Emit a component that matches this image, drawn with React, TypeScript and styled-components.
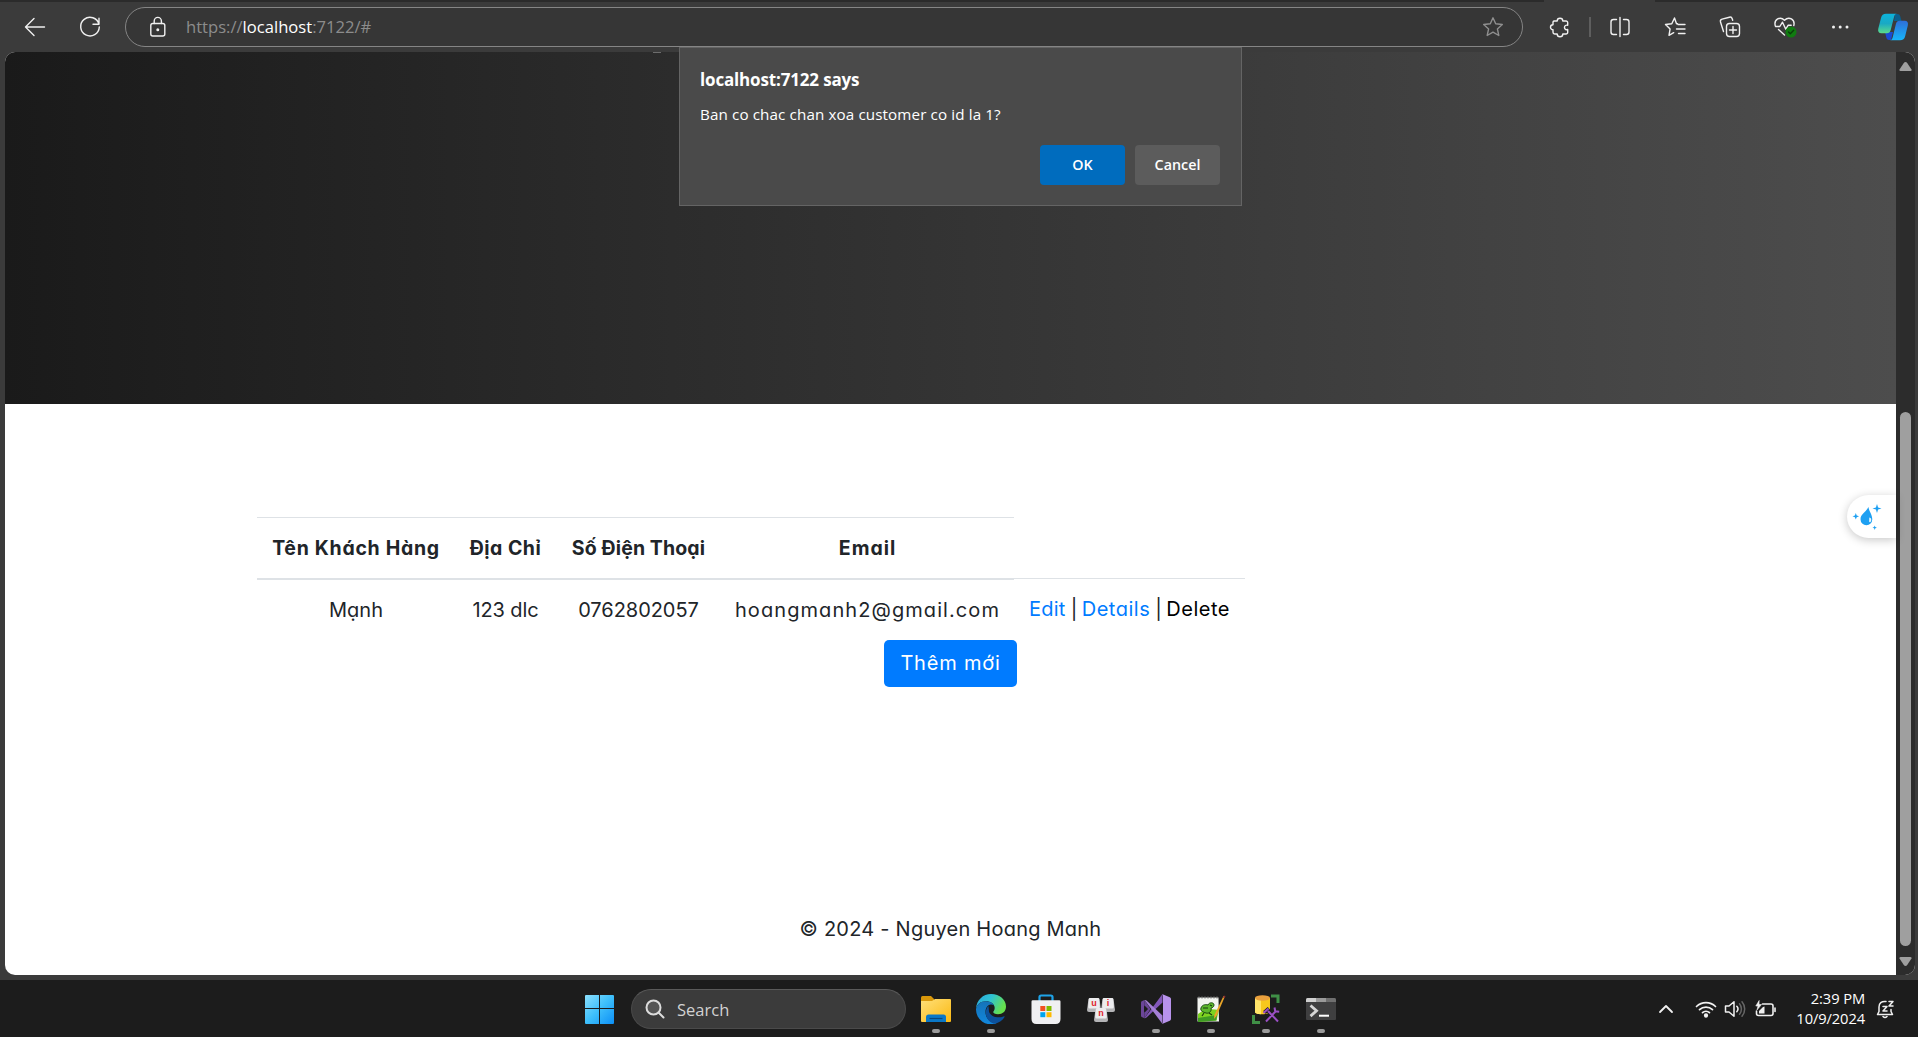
import React from 'react';
import styled, { createGlobalStyle } from 'styled-components';

const GlobalStyle = createGlobalStyle`
  * { box-sizing: border-box; }
  body { margin: 0; overflow: hidden; background: #3b3b3b; }
`;

const ui = `'Open Sans', 'Noto Sans', sans-serif`;
const pageFont = `Inter, 'Noto Sans', sans-serif`;

const Screen = styled.div`
  width: 1918px;
  height: 1037px;
  display: flex;
  flex-direction: column;
  background: #3b3b3b;
  font-family: ${ui};
`;

const TabStrip = styled.div`
  height: 2px;
  flex: none;
  display: flex;
  justify-content: space-between;
`;
const StripPart = styled.div<{ $w: number }>`
  width: ${p => p.$w}px;
  background: #2b2b2b;
`;

const Toolbar = styled.div`
  height: 50px;
  flex: none;
  display: flex;
  align-items: center;
  padding: 0 0 1px 7px;
`;
const Slot = styled.div<{ $w?: number }>`
  width: ${p => p.$w ?? 55}px;
  height: 40px;
  flex: none;
  display: flex;
  align-items: center;
  justify-content: center;
  svg { display: block; overflow: visible; }
`;
const AddressBar = styled.div`
  width: 1398px;
  height: 40px;
  margin: 0 9px 0 8px;
  padding: 0 18px 0 23px;
  flex: none;
  display: flex;
  align-items: center;
  border: 1px solid #858585;
  border-radius: 20px;
  background: #363636;
`;
const Url = styled.div`
  flex: 1;
  margin-left: 19px;
  font-size: 16.6px;
  line-height: 24px;
  color: #8c8c8c;
  b { font-weight: 400; color: #fff; }
`;
const Divider = styled.div`
  width: 2px;
  height: 20px;
  background: #5e5e5e;
`;

const Viewport = styled.div`
  position: relative;
  margin: 0 3px 0 5px;
  height: 923px;
  flex: none;
  display: flex;
  border-radius: 10px;
  overflow: hidden;
  background: #fff;
`;
const Page = styled.main`
  position: relative;
  width: 1891px;
  display: flex;
  flex-direction: column;
  font-family: ${pageFont};
  font-feature-settings: 'cv11';
  font-size: 20px;
  font-weight: 370;
  color: #212529;
`;
const Hero = styled.div`
  height: 352px;
  flex: none;
  background: linear-gradient(to right, #1a1a1a, #4d4d4d);
`;
const HeroMark = styled.div`
  width: 8px;
  height: 1px;
  margin-left: 648px;
  background: #6d6d6d;
`;
const Table = styled.div`
  width: 988px;
  margin: 113px 0 0 252px;
  display: grid;
  grid-template-columns: 196px 103px 163px 295px 231px;
  flex: none;
`;
const HeadCell = styled.div<{ $ls?: number }>`
  height: 63px;
  padding-left: 2px;
  display: flex;
  align-items: center;
  justify-content: center;
  border-top: 1px solid #dee2e6;
  border-bottom: 2px solid #dee2e6;
  font-size: 19.5px;
  font-weight: 700;
  letter-spacing: ${p => p.$ls ?? 0}px;
  white-space: nowrap;
`;
const HeadGap = styled.div`
  height: 62px;
  border-bottom: 1px solid #dee2e6;
`;
const Cell = styled.div<{ $ls?: number; $left?: boolean }>`
  height: 60px;
  padding: ${p => (p.$left ? '0 0 2px 15px' : '0 0 0 2px')};
  display: flex;
  align-items: center;
  justify-content: ${p => (p.$left ? 'flex-start' : 'center')};
  letter-spacing: ${p => p.$ls ?? 0}px;
  white-space: pre;
`;
const Link = styled.a<{ $dark?: boolean; $ls?: number }>`
  color: ${p => (p.$dark ? '#000' : '#007bff')};
  letter-spacing: ${p => p.$ls ?? 0.5}px;
`;
const AddButton = styled.button`
  align-self: center;
  width: 133px;
  height: 47px;
  padding: 0 0 2px;
  flex: none;
  border: 0;
  border-radius: 5px;
  background: #007bff;
  color: #fff;
  font: inherit;
  font-feature-settings: 'cv11';
  letter-spacing: 0.8px;
`;
const Footer = styled.footer`
  margin-top: 230px;
  height: 24px;
  line-height: 24px;
  text-align: center;
  letter-spacing: 0.23px;
`;

const Helper = styled.div`
  position: absolute;
  right: 0;
  top: 443px;
  width: 49px;
  height: 43px;
  padding: 8px 0 0 5px;
  border-radius: 22px 0 0 22px;
  background: #fff;
  box-shadow: 0 2px 10px rgba(0, 0, 0, 0.22);
`;

const Scrollbar = styled.div`
  flex: 1;
  display: flex;
  flex-direction: column;
  align-items: center;
  padding: 10px 0 9px;
  background: #2c2c2c;
  svg { display: block; }
`;
const Thumb = styled.div`
  width: 11px;
  height: 534px;
  margin: 341px 0 auto;
  border-radius: 6px;
  background: #9f9f9f;
`;

const Dialog = styled.div`
  position: absolute;
  left: 679px;
  top: 47px;
  width: 563px;
  height: 159px;
  padding: 20px 21px 20px 20px;
  display: flex;
  flex-direction: column;
  border: 1px solid #646464;
  background: #4a4a4a;
  color: #fff;
  font-family: ${ui};
`;
const DialogTitle = styled.div`
  font-size: 17px;
  line-height: 24px;
  font-weight: 700;
  letter-spacing: -0.16px;
`;
const DialogText = styled.div`
  margin-top: 11px;
  font-size: 15.2px;
  line-height: 22px;
  letter-spacing: 0.12px;
`;
const DialogActions = styled.div`
  margin-top: 20px;
  display: flex;
  justify-content: flex-end;
  gap: 10px;
`;
const DialogButton = styled.button<{ $primary?: boolean }>`
  width: 85px;
  height: 40px;
  padding: 0 0 1px;
  border: 0;
  border-radius: 4px;
  background: ${p => (p.$primary ? '#006cbe' : '#5c5c5c')};
  color: #fff;
  font: 600 14.3px ${ui};
`;

const Taskbar = styled.div`
  height: 57px;
  margin-top: 5px;
  flex: none;
  display: flex;
  align-items: flex-start;
  padding: 9px 0 0 572px;
  background: #1c1c1c;
`;
const SearchBox = styled.div`
  width: 275px;
  height: 40px;
  margin: 0 2px 0 4px;
  padding-left: 13px;
  flex: none;
  display: flex;
  align-items: center;
  gap: 12px;
  border: 1px solid #4a4a4a;
  border-top-color: #5a5a5a;
  border-radius: 20px;
  background: #3b3b3b;
  color: #d2d2d2;
  font-size: 16.5px;
`;
const TaskSlot = styled.div`
  width: 55px;
  height: 44px;
  flex: none;
  display: flex;
  flex-direction: column;
  align-items: center;
  svg { display: block; margin-top: 5px; flex: none; }
`;
const Running = styled.div`
  width: 8px;
  height: 4px;
  margin-top: 5px;
  border-radius: 2px;
  background: #9a9a9a;
`;
const Tray = styled.div`
  margin-left: auto;
  padding-right: 23px;
  height: 40px;
  display: flex;
  align-items: center;
  svg { display: block; flex: none; }
`;
const TrayIcon = styled.div<{ $gap: number }>`
  margin-right: ${p => p.$gap}px;
`;
const Clock = styled.div`
  width: 88px;
  margin: -2px 10px 0 0;
  text-align: right;
  color: #fff;
  font-size: 14.7px;
  line-height: 20px;
  letter-spacing: -0.1px;
`;

const Line = ({ w = 22, h = 22, color = '#f0f0f0', sw = 1.4, children }: any) => (
  <svg width={w} height={h} viewBox={`0 0 ${w} ${h}`} fill="none" stroke={color} strokeWidth={sw} strokeLinecap="round" strokeLinejoin="round">
    {children}
  </svg>
);

const STAR = 'M11 1.8l2.7 6 6.6.7-4.9 4.4 1.4 6.6L11 16.2l-5.8 3.3 1.4-6.6-4.9-4.4 6.6-.7z';

const Back = () => <Line><path d="M20.500 11H1.500M10 2.500L1.500 11l8.500 8.500" /></Line>;
const Refresh = () => <Line><path d="M20 8.200A9.300 9.300 0 1 0 20.300 11M20 2.200v6h-6" /></Line>;
const Lock = () => (
  <Line w={18} h={22}>
    <rect x="1.800" y="7.500" width="14" height="12.500" rx="2" />
    <path d="M5.200 7.500V5a3.600 3.600 0 0 1 7.200 0v2.500" />
    <circle cx="8.800" cy="13.700" r=".8" fill="#f0f0f0" />
  </Line>
);
const Puzzle = () => (
  <Line>
    <path d="M5 5h3.200a2.800 2.800 0 0 1 5.600 0H17a1.700 1.700 0 0 1 1.700 1.700v2.600a2.300 2.300 0 1 0 0 4.200v2.800A1.700 1.700 0 0 1 17 18h-3.200a2.800 2.800 0 0 1-5.600 0H5.700A1.700 1.700 0 0 1 4 16.300v-2.600a2.500 2.500 0 0 1 0-5V6.500A1.500 1.500 0 0 1 5 5z" />
  </Line>
);
const Split = () => (
  <Line>
    <path d="M7.500 3.500h-3a2.500 2.500 0 0 0-2.500 2.500v10a2.500 2.500 0 0 0 2.500 2.500h3M14.500 3.500h3A2.500 2.500 0 0 1 20 6v10a2.500 2.500 0 0 1-2.500 2.500h-3M11 1.500v19" />
  </Line>
);
const Favorites = () => (
  <Line>
    <path d="M13.500 7.800h-1L10.500 2 7.800 7.700l-6.300.8 4.600 4.400L5 19.400l4.700-2.700M14 8.500h7M12.500 13h8.500M14.500 17.500h6.500" />
  </Line>
);
const Collections = () => (
  <Line>
    <rect x="7.500" y="7.500" width="13" height="13" rx="3" />
    <path d="M14 10.500v7M10.500 14h7M4.500 15.500l-3-9.500a2.300 2.300 0 0 1 1.600-2.800l7.300-2a2.300 2.300 0 0 1 2.800 1.500l.5 1.600" />
  </Line>
);
const Health = () => (
  <Line>
    <path d="M1.200 9.500C-.2 3.500 6-.2 10.500 4.300 15 -.2 21.300 3.500 19.800 9.500M1.500 10.500h4.300l2.700-4.300 3.300 7 2.400-4h3M4.500 13.500l6 5.500" />
    <circle cx="17" cy="16" r="5.500" fill="#107c10" stroke="none" />
    <path d="M14.500 16l1.800 1.800 3.400-3.500" stroke="#0a3d0a" />
  </Line>
);
const Dots = () => (
  <svg width="20" height="6" fill="#f0f0f0"><circle cx="3.500" cy="3" r="1.500" /><circle cx="10.200" cy="3" r="1.500" /><circle cx="17" cy="3" r="1.500" /></svg>
);
const Copilot = () => (
  <svg width="30" height="28" viewBox="0 0 30 28">
    <defs>
      <linearGradient id="cpa" x1="0" y1="0" x2="0" y2="1"><stop stopColor="#0cb4dd" /><stop offset=".5" stopColor="#1aa9c4" /><stop offset="1" stopColor="#5bdc8a" /></linearGradient>
      <linearGradient id="cpb" x1="0" y1="0" x2="0" y2="1"><stop stopColor="#2e6fd8" /><stop offset="1" stopColor="#17b6fb" /></linearGradient>
    </defs>
    <path d="M17 1h2.500c1.500 0 2.300.8 2.800 2.500L23.500 8H16z" fill="#0b5f8e" />
    <path d="M13 27h-2c-1.500 0-2.300-1-2.700-2.500L7 19h8z" fill="#1a4bd2" />
    <path d="M8 .8h11c-1.700 0-2.400 1.200-2.900 3L12.700 17c-.7 2.400-1.800 3.300-4 3.300H3.500C.8 20.300-.4 18.500.3 15.500L3 5C3.800 2 5.200.8 8 .8z" fill="url(#cpa)" />
    <path d="M22 27.200H12c1.500 0 2.200-1 2.700-3L17.900 11c.6-2.300 1.700-3.200 4-3.200h4.700c2.800 0 3.900 1.700 3.200 4.700l-2.600 10.500c-.7 3-2.300 4.200-5.200 4.200z" fill="url(#cpb)" />
  </svg>
);

const Drop = () => (
  <svg width="32" height="28" viewBox="0 0 32 28" fill="#1ea0f2">
    <path d="M16.500 4c.3 4 3.800 7.500 3.800 12.300a5.900 5.900 0 0 1-11.800 0C8.500 11 14 9 16.500 4z" />
    <path d="M17.300 14.500c2 .3 2.300 2 1.600 4-.5 1-1.600 1-1.800 0z" fill="#e8f6ff" />
    <path d="M25 1l1.100 3.400L29.500 5.500l-3.400 1.100L25 10l-1.100-3.400-3.400-1.100 3.400-1.100zM3.800 10l.9 2.400 2.400.9-2.400.9-.9 2.400-.9-2.400-2.400-.9 2.400-.9zM22.700 22.500l.6 1.600 1.600.6-1.600.6-.6 1.600-.6-1.600-1.600-.6 1.600-.6z" />
  </svg>
);

const Windows = () => (
  <svg width="29" height="30" viewBox="0 0 29 30">
    <defs><linearGradient id="win" gradientUnits="userSpaceOnUse" x1="0" y1="0" x2="29" y2="29"><stop stopColor="#8fe1fd" /><stop offset=".5" stopColor="#3fc0fb" /><stop offset="1" stopColor="#0e91f6" /></linearGradient></defs>
    <path d="M1 1h13v13H0V2q0-1 1-1zM15 1h13q1 0 1 1v12H15zM0 15h14v15H1q-1 0-1-1zM15 15h14v14q0 1-1 1H15z" fill="url(#win)" />
  </svg>
);
const Folder = () => (
  <svg width="30" height="30" viewBox="0 0 30 30">
    <defs><linearGradient id="fol" x1="0" y1="0" x2="1" y2="1"><stop stopColor="#ffe07a" /><stop offset="1" stopColor="#fbb912" /></linearGradient></defs>
    <path d="M0 3.500Q0 2 1.500 2H10l3 3v5H0z" fill="#d9980b" />
    <path d="M0 7h11l3-2h15q1 0 1 1v21q0 1-1 1H1q-1 0-1-1z" fill="url(#fol)" />
    <path d="M5 28v-5q0-2.500 2.500-2.500h15Q25 20.500 25 23v5z" fill="#0a78c8" />
    <path d="M8.500 24.500h13" stroke="#08477f" strokeWidth="1.200" />
  </svg>
);
const Edge = () => (
  <svg width="30" height="30" viewBox="0 0 30 30">
    <defs>
      <linearGradient id="eda" x1="0" y1="0" x2="1" y2=".4"><stop stopColor="#2aa6dd" /><stop offset=".5" stopColor="#2fc3d4" /><stop offset="1" stopColor="#66e04e" /></linearGradient>
      <linearGradient id="edb" x1="0" y1="0" x2="0" y2="1"><stop stopColor="#1573b8" /><stop offset="1" stopColor="#1187dd" /></linearGradient>
    </defs>
    <path d="M0 15C.5 6 7 0 15 0c9 0 15 6 15 12.500 0 5-3.500 7.700-8 7.700-3 0-4.800-1-4.800-2.200 0-.8 1.500-1.500 1.500-4C18.700 10 14.500 7.300 10 7.300 5 7.300 1 10 0 15z" fill="url(#eda)" />
    <path d="M0 15c1-5 5-7.700 10-7.700 3.500 0 6.500 1.500 8 4-1-.7-2-.9-3.200-.8-3.500.5-5.300 3.700-5.300 7.500 0 6 4.500 10.500 11 11.300A15 15 0 0 1 0 15z" fill="url(#edb)" />
    <path d="M12.500 12c-5 4.500-3 15.500 5.500 17.700 4.500-.5 8.500-3 10.500-6.700.3-.7-.3-1-1-.6-6.500 2.600-13.500-.6-14.500-5-.3-1.900-.2-3.700-.5-5.400z" fill="#0c519c" />
  </svg>
);
const Store = () => (
  <svg width="30" height="30" viewBox="0 0 30 30">
    <path d="M8.500 8V3.200q0-1.700 1.700-1.700h9.600q1.700 0 1.700 1.700V8" fill="none" stroke="#1ea3e8" strokeWidth="2.200" />
    <path d="M.5 7.500q0-1.300 1.300-1.300h26.400q1.300 0 1.300 1.300V25q0 5-5 5h-19q-5 0-5-5z" fill="#f0f0f2" />
    <path d="M9.300 12h5v5h-5z" fill="#f25022" /><path d="M15.500 12h5v5h-5z" fill="#7fba00" />
    <path d="M9.300 18.200h5v5h-5z" fill="#00a4ef" /><path d="M15.500 18.200h5v5h-5z" fill="#ffb900" />
  </svg>
);
const KeyText = styled.text`
  font: 700 9px 'Liberation Sans', sans-serif;
  fill: #e0252c;
  text-anchor: middle;
`;
const Key = ({ x, y, t }: { x: number; y: number; t: string }) => (
  <g transform={`translate(${x} ${y})`}>
    <path d="M1.500 1Q2 0 3 0h8q1 0 1.500 1L14 12q0 2-2 2H2q-2 0-2-2z" fill="#b4b4b6" />
    <path d="M3 0h8q1 0 1.200 1l.6 8q0 1.500-1.500 1.500H2.700q-1.500 0-1.500-1.500L1.800 1Q2 0 3 0z" fill="#ececee" />
    <KeyText x={7} y={7.500}>{t}</KeyText>
  </g>
);
const Unikey = () => (
  <svg width="30" height="30" viewBox="0 0 30 30">
    <Key x={1} y={4} t="u" /><Key x={15} y={4} t="i" /><Key x={8} y={14} t="n" />
  </svg>
);
const VisualStudio = () => (
  <svg width="30" height="30" viewBox="0 0 30 30">
    <path d="M0 8.500q0-.8.700-1.200L3.500 6v18.300L.7 22.900Q0 22.500 0 21.700z" fill="#6b4699" />
    <path d="M3.500 6v5.500L7 15l-3.500 3.500v5.800L9.500 15z" fill="#6b4699" />
    <path d="M3.500 24.300L21.500 0v8.500L5.500 23.500q-1 1-2 .8z" fill="#8257b9" />
    <path d="M3.500 6q1-.3 2 .6L21.500 21.500V30L3.500 6z" fill="#a47fd6" />
    <path d="M21 0l7.800 3.200q1.200.5 1.200 1.800v20q0 1.300-1.200 1.800L21 30q1-.6 1-2V2q0-1.400-1-2z" fill="#b893ec" />
    <path d="M3 11.500v7L6.500 15z" fill="#1c1c1c" />
  </svg>
);
const Notepad = () => (
  <svg width="30" height="30" viewBox="0 0 30 30">
    <path d="M1.500 3.500h21l.5 24H1.500z" fill="#f2f4f0" />
    <path d="M2 20c7-6 14-5 21-4l-2.500 10.500L2 28z" fill="#7ed321" />
    <path d="M2 24l19-3-.7 5.500L2 28z" fill="#3f9b24" />
    <path d="M3 2.500v2M6 2.500v2M9 2.500v2M12 2.500v2M15 2.500v2M18 2.500v2M21 2.500v2" stroke="#777" strokeWidth="1.200" />
    <path d="M5 14c1-3 4-4 7-3 1-3 6-3 6 0 0 2-2 3-3 3 1 3-2 6-5 5s-6-2-5-5z" fill="#5cb82c" stroke="#1d4d12" strokeWidth="1" />
    <path d="M7 14h5M14 11l2 1M8 19l-2 3M13 19l3 2" stroke="#163c0e" strokeWidth="1.200" />
    <path d="M27.500 2l1.300.8L20.500 22 18 25l.3-3.800z" fill="#e9a528" /><path d="M27 3.500l1-2 1.500.8-1 2z" fill="#8b2e34" />
  </svg>
);
const Database = () => (
  <svg width="30" height="30" viewBox="0 0 30 30">
    <path d="M20 2h7v7M2.500 21v7.500H9" fill="none" stroke="#3f8f46" strokeWidth="3" />
    <path d="M4 4v14c0 3 15 3 15 0V4z" fill="#f7c81e" /><path d="M4 4v14c0 1.500 3 2.200 6 2.300V4z" fill="#ffe469" />
    <ellipse cx="11.500" cy="4" rx="7.500" ry="2.700" fill="#e9a03d" />
    <path d="M15 27.500L25 16M17 17l10 10.500M13.500 18.500l4.500-4M24 14.500l.5 2.500 3 .5" fill="none" stroke="#1c1c1c" strokeWidth="4" />
    <path d="M15 27.500L25 17M17 17l10 10.500M12.500 19l5-4.500M23.500 13.500l.7 3.800 4 .5" fill="none" stroke="#9a4fc4" strokeWidth="2" />
  </svg>
);
const Terminal = () => (
  <svg width="30" height="30" viewBox="0 0 30 30">
    <path d="M0 5.500Q0 4 1.500 4h27Q30 4 30 5.500V25q0 1-1 1H1q-1 0-1-1z" fill="#3f3f40" />
    <path d="M0 5.500Q0 4 1.500 4H10v4H0z" fill="#d0d0d0" /><path d="M10 4h10v4H10z" fill="#9a9a9a" /><path d="M20 4h8.500Q30 4 30 5.500V8H20z" fill="#6f6f6f" />
    <path d="M4.500 11.500l6 5.300-6 5.300" fill="none" stroke="#d6d6d6" strokeWidth="2.800" /><path d="M13 21.700h10" stroke="#fff" strokeWidth="2" />
  </svg>
);

const apps: { icon: React.ReactNode; running: boolean }[] = [
  { icon: <Folder />, running: true },
  { icon: <Edge />, running: true },
  { icon: <Store />, running: false },
  { icon: <Unikey />, running: false },
  { icon: <VisualStudio />, running: true },
  { icon: <Notepad />, running: true },
  { icon: <Database />, running: true },
  { icon: <Terminal />, running: true },
];

export default function App() {
  return (
    <>
      <GlobalStyle />
      <Screen>
        <TabStrip><StripPart $w={1544} /><StripPart $w={263} /></TabStrip>
        <Toolbar>
          <Slot><Back /></Slot>
          <Slot><Refresh /></Slot>
          <AddressBar>
            <Lock />
            <Url>https://<b>localhost</b>:7122/#</Url>
            <Line color="#8f8f8f"><path d={STAR} /></Line>
          </AddressBar>
          <Slot><Puzzle /></Slot>
          <Slot $w={5}><Divider /></Slot>
          <Slot><Split /></Slot>
          <Slot><Favorites /></Slot>
          <Slot><Collections /></Slot>
          <Slot><Health /></Slot>
          <Slot><Dots /></Slot>
          <Slot $w={51}><Copilot /></Slot>
        </Toolbar>
        <Viewport>
          <Page>
            <Hero><HeroMark /></Hero>
            <Table>
              <HeadCell $ls={0.7}>Tên Khách Hàng</HeadCell>
              <HeadCell $ls={0.5}>Địa Chỉ</HeadCell>
              <HeadCell $ls={0.12}>Số Điện Thoại</HeadCell>
              <HeadCell $ls={0.95}>Email</HeadCell>
              <HeadGap />
              <Cell>Mạnh</Cell>
              <Cell $ls={-0.1}>123 dlc</Cell>
              <Cell $ls={-0.05}>0762802057</Cell>
              <Cell $ls={1.08}>hoangmanh2@gmail.com</Cell>
              <Cell $left $ls={-0.6}><Link $ls={0.25}>Edit</Link> | <Link>Details</Link> | <Link $dark>Delete</Link></Cell>
            </Table>
            <AddButton>Thêm mới</AddButton>
            <Footer>© 2024 - Nguyen Hoang Manh</Footer>
            <Helper><Drop /></Helper>
          </Page>
          <Scrollbar>
            <svg width="13" height="9"><path d="M6.500 0Q7.500 0 8.200 1L12.500 7.500Q13 9 11.500 9H1.500Q0 9 .5 7.500L4.800 1Q5.500 0 6.500 0z" fill="#9f9f9f" /></svg>
            <Thumb />
            <svg width="13" height="9"><path d="M6.500 9Q5.500 9 4.800 8L.5 1.500Q0 0 1.500 0h10Q13 0 12.500 1.500L8.200 8Q7.500 9 6.500 9z" fill="#9f9f9f" /></svg>
          </Scrollbar>
        </Viewport>
        <Taskbar>
          <TaskSlot><Windows /></TaskSlot>
          <SearchBox>
            <Line w={20} h={20} color="#dcdcdc" sw={2}><circle cx="8.500" cy="8.500" r="7" fill="#555" /><path d="M13.500 13.500l5 5" /></Line>
            Search
          </SearchBox>
          {apps.map((a, i) => <TaskSlot key={i}>{a.icon}{a.running && <Running />}</TaskSlot>)}
          <Tray>
            <TrayIcon $gap={21}><Line w={16} h={10} sw={1.800}><path d="M2 8l6-6 6 6" /></Line></TrayIcon>
            <TrayIcon $gap={7}>
              <Line w={22} h={18} sw={1.700}>
                <path d="M1.500 6.500a13.500 13.500 0 0 1 19 0M4.500 9.700a9.300 9.300 0 0 1 13 0M7.500 12.700a5 5 0 0 1 7 0" />
                <circle cx="11" cy="15.500" r="1.300" fill="#fff" />
              </Line>
            </TrayIcon>
            <TrayIcon $gap={8}>
              <Line w={22} h={18} sw={1.500}>
                <path d="M1.500 6h3.500l5-4.300v14.600L5 12H1.500zM12.800 6.300a4 4 0 0 1 0 5.400" />
                <path d="M15.500 3.800a8 8 0 0 1 0 10.400M18 1.800a11 11 0 0 1 0 14.400" stroke="#666" />
              </Line>
            </TrayIcon>
            <TrayIcon $gap={1}>
              <Line w={22} h={18} sw={1.600}>
                <path d="M8.500 4H17a2 2 0 0 1 2 2v7.500a2 2 0 0 1-2 2H4.500a2 2 0 0 1-2-2V11M21 8v3.500" />
                <path d="M5 13.500h5.500V6.500L9 7 5 11z" fill="#f0f0f0" stroke="none" />
                <path d="M5 .8L1.800 6H4l-1 4L7.500 4.500H5.200z" fill="#f0f0f0" strokeWidth=".6" />
              </Line>
            </TrayIcon>
            <Clock><div>2:39 PM</div><div>10/9/2024</div></Clock>
            <Line w={20} h={20} sw={1.500}>
              <path d="M11 2.500c-4.500-.7-7 2-7 5.500v4.500L2.500 15.500h15L16 12.500v-2M8 17.500q2 2 4 0M8 7.500h4l-4 4.500h4M14 2.500h4l-4 4.500h4" />
            </Line>
          </Tray>
        </Taskbar>
      </Screen>
      <Dialog>
        <DialogTitle>localhost:7122 says</DialogTitle>
        <DialogText>Ban co chac chan xoa customer co id la 1?</DialogText>
        <DialogActions>
          <DialogButton $primary>OK</DialogButton>
          <DialogButton>Cancel</DialogButton>
        </DialogActions>
      </Dialog>
    </>
  );
}
